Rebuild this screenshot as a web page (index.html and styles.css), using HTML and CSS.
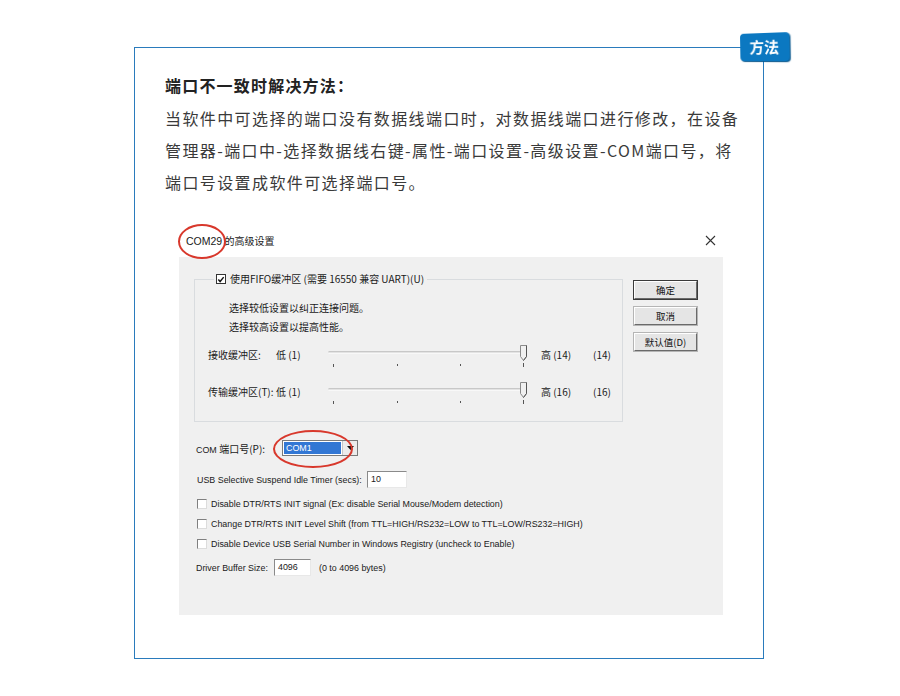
FILE: index.html
```html
<!DOCTYPE html>
<html lang="zh-CN">
  <head>
    <meta charset="utf-8" />
    <title>端口不一致时解决方法</title>
    <link rel="stylesheet" href="styles.css">
  </head>
  <body>
    <div class="card">
      <span class="badge">方法</span>

      <h2 class="tip-title">端口不一致时解决方法：</h2>
      <p class="tip-text">
        当软件中可选择的端口没有数据线端口时，对数据线端口进行修改，在设备<br>
        管理器-端口中-选择数据线右键-属性-端口设置-高级设置-COM端口号，将<br>
        端口号设置成软件可选择端口号。
      </p>

      <div class="shot">
        <div class="shot-title">
          <span class="circled com29">COM29</span> 的高级设置
          <svg class="close" width="11" height="11" viewBox="0 0 11 11">
            <path d="M1 1 L10 10 M10 1 L1 10" stroke="#333" stroke-width="1.1" />
          </svg>
        </div>

        <div class="shot-body">
          <div class="top-row">
            <fieldset class="group">
              <legend class="zh">
                <span class="cb checked">
                  <svg width="9" height="9" viewBox="0 0 9 9">
                    <path d="M1.5 4.5 L3.5 6.8 L7.5 1.8" fill="none" stroke="#111" stroke-width="1.6" />
                  </svg>
                </span>
                使用FIFO缓冲区 (需要 16550 兼容 UART)(U)
              </legend>
              <div class="hint zh">选择较低设置以纠正连接问题。</div>
              <div class="hint zh">选择较高设置以提高性能。</div>

              <div class="slider-row zh">
                <span>接收缓冲区:</span>
                <span>低 (1)</span>
                <svg width="213" height="24" viewBox="0 0 213 24">
                  <path d="M0.5 8 H196" stroke="#a0a0a0" />
                  <path d="M0.5 9 H196" stroke="#fff" />
                  <path d="M5.5 20 V23 M69.5 20 V22 M132.5 20 V22 M195.5 19 V23" stroke="#555" />
                  <path d="M192.5 1.5 H198.5 V12.5 L195.5 16.5 L192.5 12.5 Z" fill="#f0f0f0" stroke="#8a8a8a" />
                  <path d="M198.5 1.5 V12.5 L195.5 16.5" fill="none" stroke="#555" />
                </svg>
                <span>高 (14)</span>
                <span>(14)</span>
              </div>
              <div class="slider-row zh">
                <span>传输缓冲区(T):</span>
                <span>低 (1)</span>
                <svg width="213" height="24" viewBox="0 0 213 24">
                  <path d="M0.5 8 H196" stroke="#a0a0a0" />
                  <path d="M0.5 9 H196" stroke="#fff" />
                  <path d="M5.5 20 V23 M69.5 20 V22 M132.5 20 V22 M195.5 19 V23" stroke="#555" />
                  <path d="M192.5 1.5 H198.5 V12.5 L195.5 16.5 L192.5 12.5 Z" fill="#f0f0f0" stroke="#8a8a8a" />
                  <path d="M198.5 1.5 V12.5 L195.5 16.5" fill="none" stroke="#555" />
                </svg>
                <span>高 (16)</span>
                <span>(16)</span>
              </div>
            </fieldset>

            <div class="buttons zh">
              <button class="win-btn default">确定</button>
              <button class="win-btn">取消</button>
              <button class="win-btn">默认值(D)</button>
            </div>
          </div>

          <div class="field-row port-row">
            <span class="label port-label">COM <span class="zh">端口号(P):</span></span>
            <span class="combo circled-combo">
              <span class="combo-value">COM1</span>
              <span class="combo-arrow">
                <svg width="7" height="4" viewBox="0 0 7 4"><path d="M0 0 H7 L3.5 4 Z" fill="#111" /></svg>
              </span>
            </span>
          </div>

          <div class="field-row usb-row">
            <span class="label usb-label">USB Selective Suspend Idle Timer (secs):</span>
            <span class="textbox usb-box">10</span>
          </div>

          <div class="check-row"><span class="cb"></span>Disable DTR/RTS INIT signal (Ex: disable Serial Mouse/Modem detection)</div>
          <div class="check-row"><span class="cb"></span>Change DTR/RTS INIT Level Shift (from TTL=HIGH/RS232=LOW to TTL=LOW/RS232=HIGH)</div>
          <div class="check-row"><span class="cb"></span>Disable Device USB Serial Number in Windows Registry (uncheck to Enable)</div>

          <div class="field-row buffer-row">
            <span class="label buffer-label">Driver Buffer Size:</span>
            <span class="textbox buffer-box">4096</span>
            <span class="buffer-note">(0 to 4096 bytes)</span>
          </div>
        </div>
      </div>
    </div>
  </body>
</html>
```

FILE: styles.css
```css
body {
  margin: 0;
  background-color: #ffffff;
  font-family: "Noto Sans CJK SC", "Noto Sans", sans-serif;
}

.card {
  position: relative;
  box-sizing: border-box;
  width: 630px;
  height: 612px;
  margin: 47px 0 0 134px;
  padding: 21px 0 0 30px;
  border: 1px solid #2a7bbc;
}

.badge {
  position: absolute;
  top: -15px;
  right: -26px;
  width: 50px;
  height: 28px;
  line-height: 28px;
  text-align: center;
  color: #ffffff;
  font-size: 15px;
  font-weight: bold;
  background-color: #0b78c1;
  border-radius: 4px;
  box-shadow: 1px 1px 1px #06568c;
  transform: perspective(120px) rotateY(-10deg) rotate(-1deg);
}

.tip-title {
  margin: 0;
  font-size: 16px;
  line-height: 32px;
  letter-spacing: 1.2px;
  color: #222222;
}

.tip-text {
  margin: 1px 0 0;
  font-size: 16px;
  line-height: 32px;
  letter-spacing: 1.4px;
  color: #3a3a3a;
}

/* screenshot of the windows dialog */
.shot {
  width: 544px;
  margin: 24px 0 0 14px;
  font-family: "Liberation Sans", "Noto Sans CJK SC", sans-serif;
  font-size: 8.9px;
  color: #1a1a1a;
}

.zh {
  font-family: "Noto Sans CJK SC", sans-serif;
  font-size: 10px;
}

.shot-title {
  position: relative;
  height: 35px;
  padding-left: 7px;
  line-height: 38px;
  font-family: "Noto Sans CJK SC", sans-serif;
  font-size: 10px;
  background-color: #ffffff;
}

.com29 {
  font-family: "Liberation Sans", sans-serif;
  font-size: 10.5px;
}

.circled {
  position: relative;
}

.circled::after {
  content: "";
  position: absolute;
  left: -8px;
  top: -11px;
  width: 44px;
  height: 31px;
  border: 2px solid #d8382c;
  border-radius: 50%;
}

.close {
  position: absolute;
  right: 7px;
  top: 13px;
}

.shot-body {
  height: 358px;
  box-sizing: border-box;
  padding: 15px 0 0 15px;
  background-color: #f0f0f0;
}

.top-row {
  display: flex;
  align-items: flex-start;
}

.group {
  width: 429px;
  box-sizing: border-box;
  margin: 0;
  padding: 12px 0 11px 13px;
  border: 1px solid #d9dcdf;
  min-width: 0;
}

.group legend {
  margin-left: 6px;
  padding: 0 3px 0 2px;
  line-height: 14px;
  display: flex;
  align-items: center;
  gap: 4px;
}

.hint {
  padding-left: 21px;
  line-height: 19px;
}

.slider-row {
  display: grid;
  grid-template-columns: 68px 52px 213px 52px auto;
  align-items: start;
  height: 37px;
  box-sizing: border-box;
  padding-top: 9px;
  line-height: 19px;
}

.slider-row svg {
  margin-top: -1px;
}

.buttons {
  display: flex;
  flex-direction: column;
  gap: 8px;
  margin: 9px 0 0 11px;
}

.win-btn {
  width: 63px;
  height: 18px;
  padding: 0;
  font-family: inherit;
  font-size: 9.5px;
  color: #111111;
  background-color: #e5e5e5;
  border: 1px solid;
  border-color: #ffffff #6a6a6a #6a6a6a #ffffff;
  box-shadow: 0 0 0 1px #b5b5b5;
}

.win-btn.default {
  box-shadow: 0 0 0 1px #3a3a3a;
}

.field-row {
  display: flex;
  align-items: center;
}

.port-row {
  margin-top: 18px;
  height: 16px;
  padding-left: 2px;
}

.port-label {
  width: 86px;
}

.combo {
  display: flex;
  width: 76px;
  height: 16px;
  box-sizing: border-box;
  border: 1px solid #7a7a7a;
  background-color: #ffffff;
}

.circled-combo {
  position: relative;
}

.circled-combo::after {
  content: "";
  position: absolute;
  left: -10px;
  top: -11px;
  width: 76px;
  height: 34px;
  border: 2px solid #d8382c;
  border-radius: 50%;
}

.combo-value {
  flex: 1;
  margin: 1px;
  padding-left: 2px;
  line-height: 12px;
  color: #ffffff;
  background-color: #3277d4;
}

.combo-arrow {
  width: 14px;
  display: flex;
  align-items: center;
  justify-content: center;
  border-left: 1px solid #c8c8c8;
  background-color: #ececec;
}

.textbox {
  box-sizing: border-box;
  height: 17px;
  padding-left: 3px;
  line-height: 15px;
  background-color: #ffffff;
  border: 1px solid;
  border-color: #8a8a8a #e8e8e8 #e8e8e8 #8a8a8a;
}

.usb-row {
  margin-top: 15px;
  padding-left: 3px;
}

.usb-label {
  width: 170px;
}

.usb-box {
  width: 40px;
}

.check-row {
  display: flex;
  align-items: center;
  height: 20px;
  padding-left: 3px;
}

.usb-row + .check-row {
  margin-top: 6px;
}

.cb {
  display: inline-flex;
  align-items: center;
  justify-content: center;
  box-sizing: border-box;
  width: 10px;
  height: 10px;
  margin-right: 4px;
  background-color: #ffffff;
  border: 1px solid;
  border-color: #808080 #dcdcdc #dcdcdc #808080;
}

.cb.checked {
  margin-right: 0;
  border-color: #333333;
}

.buffer-row {
  margin-top: 5px;
  padding-left: 2px;
}

.buffer-label {
  width: 78px;
}

.buffer-box {
  width: 37px;
}

.buffer-note {
  margin-left: 8px;
}
```
